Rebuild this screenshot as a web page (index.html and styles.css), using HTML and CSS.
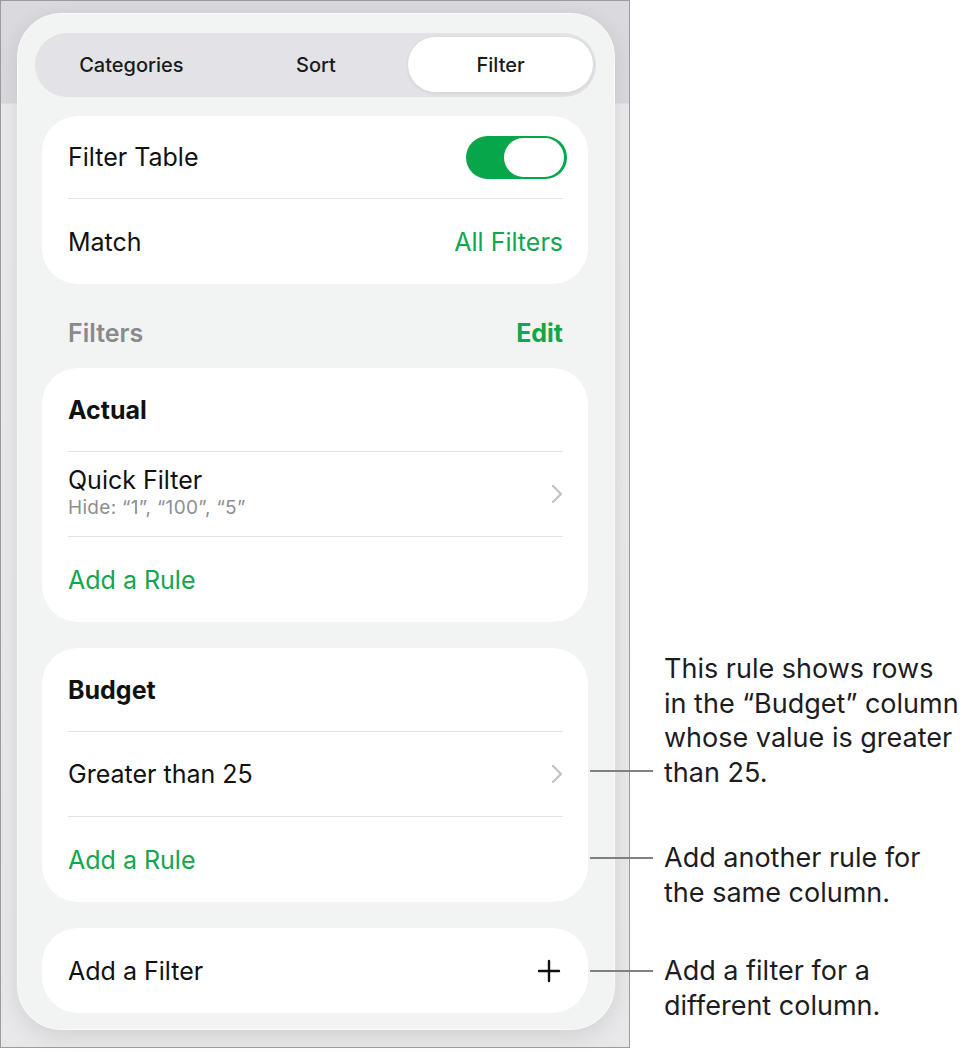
FILE: index.html
```html
<!DOCTYPE html>
<html lang="en">
<head>
<meta charset="UTF-8">
<meta name="viewport" content="width=device-width, initial-scale=1.0">
<title>Filter Table</title>
<link rel="stylesheet" href="styles.css">
</head>
<body>
<div class="figure">
  <div class="device">
    <div class="sheet">
      <div class="segmented">
        <span class="seg">Categories</span>
        <span class="seg">Sort</span>
        <span class="seg seg-on">Filter</span>
      </div>

      <div class="card">
        <div class="row row-a"><span>Filter Table</span><span class="switch"><span class="knob"></span></span></div>
        <div class="row row-b"><span>Match</span><span class="accent">All Filters</span></div>
      </div>

      <div class="section">
        <span class="section-title">Filters</span>
        <span class="edit">Edit</span>
      </div>

      <div class="card">
        <div class="row row-head"><span class="bold">Actual</span></div>
        <div class="row">
          <div class="stack">
            <span>Quick Filter</span>
            <span class="sub">Hide: “1”, “100”, “5”</span>
          </div>
          <svg class="chev" width="14" height="20" viewBox="0 0 14 20"><path d="M3 2 L11 10 L3 18" fill="none" stroke="#c4c4c7" stroke-width="2.4" stroke-linecap="round" stroke-linejoin="round"/></svg>
        </div>
        <div class="row row-last"><span class="accent">Add a Rule</span></div>
      </div>

      <div class="card">
        <div class="row row-head"><span class="bold">Budget</span></div>
        <div class="row">
          <span>Greater than 25</span>
          <svg class="chev" width="14" height="20" viewBox="0 0 14 20"><path d="M3 2 L11 10 L3 18" fill="none" stroke="#c4c4c7" stroke-width="2.4" stroke-linecap="round" stroke-linejoin="round"/></svg>
        </div>
        <div class="row row-last"><span class="accent">Add a Rule</span></div>
      </div>

      <div class="card">
        <div class="row">
          <span>Add a Filter</span>
          <svg class="plus" width="24" height="24" viewBox="0 0 24 24"><path d="M12 2 V22 M2 12 H22" fill="none" stroke="#111" stroke-width="2.4" stroke-linecap="round"/></svg>
        </div>
      </div>
    </div>
  </div>

  <div class="callout callout-1">
    <span class="leader"></span>
    <p>This rule shows rows<br>in the “Budget” column<br>whose value is greater<br>than 25.</p>
  </div>
  <div class="callout callout-2">
    <span class="leader"></span>
    <p>Add another rule for<br>the same column.</p>
  </div>
  <div class="callout callout-3">
    <span class="leader"></span>
    <p>Add a filter for a<br>different column.</p>
  </div>
</div>
</body>
</html>
```

FILE: styles.css
```css
body {
  margin: 0;
  background: #fff;
  font-family: 'Inter', 'Noto Sans', sans-serif;
  color: #111;
}
.figure {
  position: relative;
  width: 972px;
  height: 1052px;
}
.device {
  border: 1px solid #9c9c9c;
  background: linear-gradient(#dadade 0, #dadade 102px, #ebebed 103px, #e8e8ea 100%);
  padding: 12px 0 0 16px;
  width: 612px;
  height: 1034px;
}
.sheet {
  width: 598px;
  height: 1017px;
  box-sizing: border-box;
  background: #f2f3f3;
  border: 1px solid #fafafa;
  border-radius: 44px;
  box-shadow: 0 6px 22px rgba(0, 0, 0, 0.10);
  padding: 19px 17px 0 17px;
}
.segmented {
  display: grid;
  grid-template-columns: 1fr 1fr 1fr;
  height: 64px;
  box-sizing: border-box;
  padding: 4px 3px 5px 4px;
  background: #e3e3e7;
  border-radius: 32px;
  margin-right: 1px;
  margin-bottom: 19px;
}
.seg {
  display: flex;
  align-items: center;
  justify-content: center;
  font-size: 20px;
  font-weight: 500;
  color: #1a1a1a;
  border-radius: 28px;
}
.seg-on {
  background: #fff;
  box-shadow: 0 1px 4px rgba(0, 0, 0, 0.08);
}
.card {
  background: #fff;
  border-radius: 36px;
  margin: 0 9px 26px 7px;
  padding: 0 25px 0 26px;
}
.row {
  display: flex;
  align-items: center;
  justify-content: space-between;
  box-sizing: border-box;
  height: 85px;
  font-size: 25px;
  border-top: 1px solid #e4e4e6;
}
.row:first-child {
  border-top: none;
}
.row-a {
  height: 82px;
}
.row-b {
  height: 86px;
}
.row-head {
  height: 83px;
}
.row-last {
  height: 86px;
}
.bold {
  font-weight: 700;
}
.accent {
  color: #12a64d;
}
.switch {
  display: flex;
  justify-content: flex-end;
  align-items: center;
  width: 101px;
  height: 43px;
  box-sizing: border-box;
  padding: 2px 3px;
  background: #08a64b;
  border-radius: 22px;
  margin-right: -4px;
}
.knob {
  width: 60px;
  height: 39px;
  background: #fff;
  border-radius: 20px;
}
.section {
  display: flex;
  justify-content: space-between;
  align-items: center;
  height: 46px;
  margin-bottom: 12px;
  padding: 0 34px 0 33px;
  font-size: 25px;
  font-weight: 600;
}
.section-title {
  color: #8a8a8e;
}
.edit {
  color: #12a64d;
  font-weight: 700;
}
.stack {
  display: flex;
  flex-direction: column;
  gap: 1px;
  padding-bottom: 5px;
}
.sub {
  font-size: 19px;
  letter-spacing: 0.3px;
  color: #8e8e93;
}
.chev {
  margin-right: -1px;
}
.plus {
  margin-right: 2px;
}
.callout {
  position: absolute;
  left: 590px;
  display: flex;
  align-items: flex-start;
}
.callout p {
  margin: 0 0 0 11px;
  font-size: 27px;
  line-height: 34.5px;
  color: #1d1d1f;
}
.leader {
  width: 63px;
  height: 2px;
  background: #808080;
}
.callout-1 {
  top: 652px;
}
.callout-1 .leader {
  margin-top: 118px;
}
.callout-2 {
  top: 841px;
}
.callout-2 .leader {
  margin-top: 16px;
}
.callout-3 {
  top: 954px;
}
.callout-3 .leader {
  margin-top: 16px;
}
```
